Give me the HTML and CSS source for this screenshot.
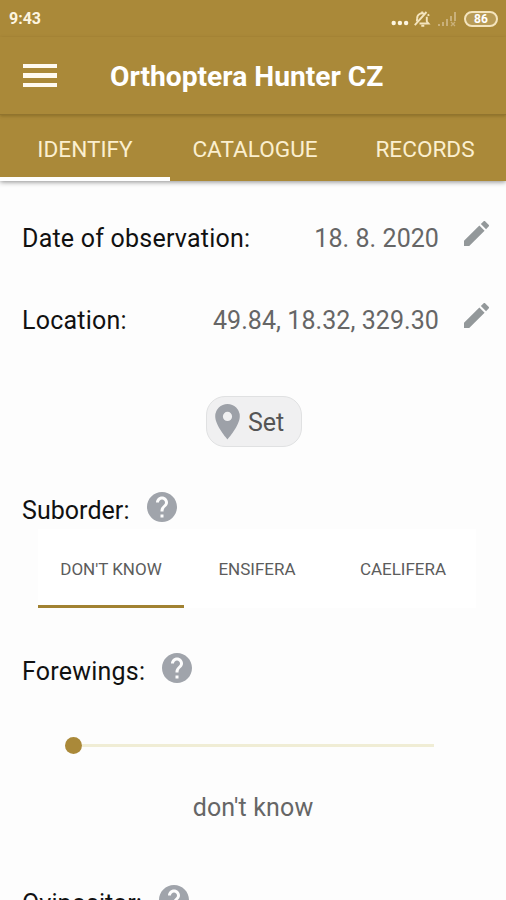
FILE: index.html
```html
<!DOCTYPE html>
<html lang="en">
<head>
    <meta charset="UTF-8">
    <meta name="viewport" content="width=device-width, initial-scale=1.0">
    <title>Orthoptera Hunter CZ</title>
    <link rel="stylesheet" href="styles.css">
</head>
<body>
    <!-- shared icons -->
    <svg class="icon-defs" width="0" height="0">
        <symbol id="icon-edit" viewBox="3 3 18 18">
            <path d="M3 17.25V21h3.75L17.81 9.94l-3.75-3.75L3 17.25zM20.71 7.04a1 1 0 0 0 0-1.41l-2.34-2.34a1 1 0 0 0-1.41 0l-1.83 1.83 3.75 3.75 1.83-1.83z"/>
        </symbol>
        <symbol id="icon-help" viewBox="2 2 20 20">
            <path d="M12 2C6.48 2 2 6.48 2 12s4.48 10 10 10 10-4.48 10-10S17.52 2 12 2zm1 17h-2v-2h2v2zm2.07-7.75l-.9.92C13.45 12.9 13 13.5 13 15h-2v-.5c0-1.1.45-2.1 1.17-2.83l1.24-1.26c.37-.36.59-.86.59-1.41 0-1.1-.9-2-2-2s-2 .9-2 2H8c0-2.21 1.79-4 4-4s4 1.79 4 4c0 .88-.36 1.68-.93 2.25z"/>
        </symbol>
    </svg>

    <header class="app-header">
        <div class="status-bar">
            <span class="clock">9:43</span>
            <div class="status-icons">
                <svg class="dots" width="18" height="6" viewBox="0 0 18 6">
                    <circle cx="2.7" cy="3" r="2.2"/>
                    <circle cx="8.9" cy="3" r="2.2"/>
                    <circle cx="15.1" cy="3" r="2.2"/>
                </svg>
                <svg class="bell" width="18" height="18" viewBox="0 0 18 18">
                    <path d="M4.2 8.500a4.700 4.700 0 0 1 7.500-4.200M13.800 6.800v4.700l1.700 2H6.500M3.800 11.500l.4-3"/>
                    <path d="M8.300 15.800h3M9.200 3.200V1.500M1.800 15.200L13.500 2M14.500 5.500l1.800-.8"/>
                </svg>
                <svg class="signal" width="20" height="16" viewBox="0 0 20 16">
                    <path d="M1 15v-2h2v2zM5 15v-4h2v4zM9 15V8h2v7zM13 10V5h2v5zM17 10V1h2v9z"/>
                    <path d="M14 11l4 4M18 11l-4 4" class="signal-cross"/>
                </svg>
                <span class="battery">86</span>
            </div>
        </div>
        <div class="title-bar">
            <div class="menu">
                <span></span>
                <span></span>
                <span></span>
            </div>
            <h1 class="title">Orthoptera Hunter CZ</h1>
        </div>
        <nav class="tabs">
            <a class="tab active">IDENTIFY</a>
            <a class="tab">CATALOGUE</a>
            <a class="tab">RECORDS</a>
        </nav>
    </header>

    <main class="content">
        <div class="row">
            <span class="label">Date of observation:</span>
            <span class="value">18. 8. 2020</span>
            <svg class="edit"><use href="#icon-edit"/></svg>
        </div>
        <div class="row">
            <span class="label">Location:</span>
            <span class="value">49.84, 18.32, 329.30</span>
            <svg class="edit"><use href="#icon-edit"/></svg>
        </div>

        <button class="set-button">
            <svg class="pin" width="25" height="36" viewBox="0 0 25 36">
                <path fill-rule="evenodd" d="M12.5 0A12.3 12.3 0 0 0 .2 12.3C.2 21.5 12.5 35.5 12.5 35.5S24.8 21.5 24.8 12.3A12.3 12.3 0 0 0 12.5 0zm0 17a4.6 4.6 0 1 1 0-9.2 4.6 4.6 0 0 1 0 9.2z"/>
            </svg>
            <span>Set</span>
        </button>

        <div class="question suborder">
            <span class="label">Suborder:</span>
            <svg class="help"><use href="#icon-help"/></svg>
        </div>
        <div class="options">
            <span class="option selected">DON'T KNOW</span>
            <span class="option">ENSIFERA</span>
            <span class="option">CAELIFERA</span>
        </div>

        <div class="question forewings">
            <span class="label">Forewings:</span>
            <svg class="help"><use href="#icon-help"/></svg>
        </div>
        <div class="slider">
            <div class="slider-thumb"></div>
            <div class="slider-track"></div>
        </div>
        <p class="slider-value">don't know</p>

        <div class="question ovipositor">
            <span class="label">Ovipositor:</span>
            <svg class="help"><use href="#icon-help"/></svg>
        </div>
    </main>
</body>
</html>
```
FILE: styles.css
```css
* {
    margin: 0;
    padding: 0;
    box-sizing: border-box;
    font-family: Roboto, 'Liberation Sans', sans-serif;
}

body {
    width: 506px;
    height: 900px;
    overflow: hidden;
    background-color: #fdfdfd;
}

.icon-defs {
    display: block;
}

.app-header {
    height: 181px;
    background-color: #aa8939;
    color: #fff;
    box-shadow: 0 1px 5px rgba(0,0,0,0.45);
}

/* status bar */
.status-bar {
    height: 37px;
    padding: 0 8px 0 9px;
    display: flex;
    align-items: center;
    justify-content: space-between;
}

.clock {
    font-size: 16px;
    font-weight: bold;
    color: #fdf5e0;
}

.status-icons {
    display: flex;
    align-items: center;
}

.dots {
    fill: #fdf5e0;
    margin: 8px 4px 0 0;
}

.bell {
    fill: none;
    stroke: #f4e4bd;
    stroke-width: 1.9;
    margin-right: 6px;
}

.signal {
    fill: #c9b07a;
    margin-right: 7px;
}

.signal-cross {
    stroke: #c9b07a;
    stroke-width: 1.3;
}

.battery {
    width: 34px;
    height: 16px;
    border: 2px solid #f4e4bd;
    border-radius: 8px;
    background-color: #b89b56;
    font-size: 12px;
    font-weight: bold;
    line-height: 12px;
    text-align: center;
}

/* title */
.title-bar {
    height: 78px;
    padding-left: 23px;
    display: flex;
    align-items: center;
    border-bottom: 1px solid #91742e;
    box-shadow: 0 1px 3px rgba(80,60,10,0.35);
}

.menu {
    width: 34px;
    margin-right: 53px;
    display: flex;
    flex-direction: column;
    gap: 5px;
}

.menu span {
    height: 4.5px;
    background-color: #fffaf0;
}

.title {
    padding-top: 2px;
    font-size: 28.2px;
    font-weight: bold;
    white-space: nowrap;
}

.tabs {
    height: 66px;
    display: flex;
}

.tab {
    display: flex;
    justify-content: center;
    align-items: center;
    width: 170px;
    flex-shrink: 0;
    padding-top: 6px;
    font-size: 22.6px;
    color: #fbefcf;
    border-bottom: 4px solid transparent;
}

.tab.active {
    border-bottom-color: #fff;
}

/* form */
.content {
    padding: 42px 17px 0 22px;
}

.row {
    height: 82px;
    display: flex;
    align-items: flex-start;
}

.label {
    font-size: 25px;
    line-height: 31px;
    letter-spacing: 0.22px;
    color: #111;
    white-space: nowrap;
}

.value {
    margin-left: auto;
    font-size: 25px;
    line-height: 31px;
    letter-spacing: 0.07px;
    color: #666;
}

.edit {
    width: 25px;
    height: 25px;
    margin: -2px 0 0 25px;
    fill: #93989a;
}

.set-button {
    width: 96px;
    height: 51px;
    margin: 9px 0 0 184px;
    padding: 0 0 0 8px;
    display: flex;
    align-items: center;
    gap: 8px;
    border: 1px solid #e0e1e2;
    border-radius: 19px;
    background-color: #f0f0f1;
    font-size: 25px;
    color: #555;
}

.set-button span {
    padding-top: 2px;
}

.pin {
    fill: #9da1a8;
}

.question {
    display: flex;
    align-items: flex-start;
}

.help {
    width: 30px;
    height: 30px;
    margin: -3px 0 0 17px;
    fill: #a0a4ab;
}

.suborder {
    margin-top: 48px;
}

.suborder .label {
    letter-spacing: 0.05px;
}

.options {
    width: 438px;
    height: 79px;
    margin: 3px 0 0 16px;
    display: flex;
    background-color: #fff;
}

.option {
    flex: 1;
    padding-top: 4px;
    display: flex;
    justify-content: center;
    align-items: center;
    font-size: 17px;
    color: #5c5c5c;
    border-bottom: 3px solid transparent;
}

.option.selected {
    border-bottom-color: #a18232;
}

.forewings {
    margin-top: 48px;
}

.slider {
    width: 369px;
    height: 17px;
    margin: 50px 0 0 43px;
    display: flex;
    align-items: center;
}

.slider-thumb {
    width: 17px;
    height: 17px;
    border-radius: 50%;
    background-color: #aa8939;
}

.slider-track {
    flex: 1;
    height: 3px;
    background-color: #f0edd5;
}

.slider-value {
    margin: 38px 0 0 -5px;
    font-size: 25px;
    line-height: 31px;
    letter-spacing: 0.15px;
    text-align: center;
    color: #666;
}

.ovipositor {
    margin-top: 65px;
}

.ovipositor .label {
    letter-spacing: 0.05px;
}
```
